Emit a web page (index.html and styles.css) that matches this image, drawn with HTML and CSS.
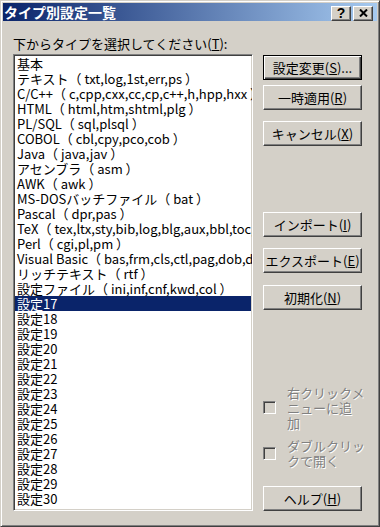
FILE: index.html
```html
<!DOCTYPE html>
<html lang="ja">
<head>
    <meta charset="UTF-8">
    <title>タイプ別設定一覧</title>
    <link rel="stylesheet" href="styles.css">
</head>
<body>

    <div class="window">
        <!-- Title bar -->
        <div class="titlebar">
            <h1>タイプ別設定一覧</h1>
            <div class="title-btn help-btn">?</div>
            <div class="title-btn close-btn">
                <svg width="9" height="8" viewBox="0 0 9 8">
                    <path d="M1 0.5 L8 7.5 M8 0.5 L1 7.5" stroke="#000" stroke-width="2" fill="none"/>
                </svg>
            </div>
        </div>

        <div class="content">
            <!-- Type list -->
            <div class="left">
                <label class="list-label">下からタイプを選択してください(<u>T</u>):</label>
                <ul class="listbox">
                    <li>基本</li>
                    <li>テキスト（ txt,log,1st,err,ps ）</li>
                    <li>C/C++（ c,cpp,cxx,cc,cp,c++,h,hpp,hxx ）</li>
                    <li>HTML（ html,htm,shtml,plg ）</li>
                    <li>PL/SQL（ sql,plsql ）</li>
                    <li>COBOL（ cbl,cpy,pco,cob ）</li>
                    <li>Java（ java,jav ）</li>
                    <li>アセンブラ（ asm ）</li>
                    <li>AWK（ awk ）</li>
                    <li>MS-DOSバッチファイル（ bat ）</li>
                    <li>Pascal（ dpr,pas ）</li>
                    <li>TeX（ tex,ltx,sty,bib,log,blg,aux,bbl,toc,lof,lot,idx ）</li>
                    <li>Perl（ cgi,pl,pm ）</li>
                    <li>Visual Basic（ bas,frm,cls,ctl,pag,dob,dsr,vb ）</li>
                    <li>リッチテキスト（ rtf ）</li>
                    <li>設定ファイル（ ini,inf,cnf,kwd,col ）</li>
                    <li class="selected">設定17</li>
                    <li>設定18</li>
                    <li>設定19</li>
                    <li>設定20</li>
                    <li>設定21</li>
                    <li>設定22</li>
                    <li>設定23</li>
                    <li>設定24</li>
                    <li>設定25</li>
                    <li>設定26</li>
                    <li>設定27</li>
                    <li>設定28</li>
                    <li>設定29</li>
                    <li>設定30</li>
                </ul>
            </div>

            <!-- Buttons -->
            <div class="right">
                <button class="btn default">設定変更(<u>S</u>)...</button>
                <button class="btn mt-5">一時適用(<u>R</u>)</button>
                <button class="btn mt-11">キャンセル(<u>X</u>)</button>

                <button class="btn mt-66">インポート(<u>I</u>)</button>
                <button class="btn mt-11">エクスポート(<u>E</u>)</button>
                <button class="btn mt-12">初期化(<u>N</u>)</button>

                <div class="check-row mt-75">
                    <span class="checkbox"></span>
                    <span class="check-label">右クリックメ<br>ニューに追<br>加</span>
                </div>
                <div class="check-row mt-8">
                    <span class="checkbox"></span>
                    <span class="check-label">ダブルクリッ<br>クで開く</span>
                </div>

                <button class="btn mt-18">ヘルプ(<u>H</u>)</button>
            </div>
        </div>
    </div>

</body>
</html>
```

FILE: styles.css
```css
* {
    margin: 0;
    padding: 0;
    box-sizing: border-box;
}

body {
    font-family: "Noto Sans CJK JP", sans-serif;
    font-size: 13px;
    color: #000;
    background: #D4D0C8;
}

/* Window frame */
.window {
    width: 380px;
    height: 527px;
    background: #D4D0C8;
    border: 1px solid;
    border-color: #D4D0C8 #404040 #404040 #D4D0C8;
    box-shadow: inset 1px 1px #fff, inset -1px -1px #808080;
    padding: 2px;
    display: flex;
    flex-direction: column;
    overflow: hidden;
}

.titlebar {
    height: 18px;
    flex-shrink: 0;
    display: flex;
    align-items: center;
    padding: 0 4px 0 1px;
    background: linear-gradient(to right, #0A246A, #A6CAF0);
    color: #fff;
}

.titlebar h1 {
    flex: 1;
    font-size: 14px;
    font-weight: bold;
    line-height: 18px;
}

.title-btn {
    width: 20px;
    height: 15px;
    margin-top: 2px;
    background: #D4D0C8;
    border: 1px solid;
    border-color: #fff #404040 #404040 #fff;
    box-shadow: inset -1px -1px #808080;
    display: flex;
    align-items: center;
    justify-content: center;
    color: #000;
}

.help-btn {
    font-family: "Liberation Sans", sans-serif;
    font-weight: bold;
    font-size: 14px;
    line-height: 13px;
}

.close-btn {
    margin-left: 2px;
}

.content {
    flex: 1;
    display: flex;
    padding: 15px 15px 0 10px;
}

/* List */
.left {
    width: 240px;
    flex-shrink: 0;
}

.list-label {
    display: block;
    line-height: 15px;
    margin-bottom: 3px;
    white-space: nowrap;
}

.listbox {
    list-style: none;
    height: 457px;
    background: #fff;
    border: 1px solid;
    border-color: #808080 #fff #fff #808080;
    box-shadow: inset 1px 1px #404040, inset -1px -1px #D4D0C8;
    padding: 1px;
    overflow: hidden;
}

.listbox li {
    height: 15px;
    line-height: 15px;
    padding-left: 2px;
    white-space: nowrap;
}

.listbox li.selected {
    background: #0A246A;
    color: #fff;
}

/* Buttons */
.right {
    width: 99px;
    flex-shrink: 0;
    margin-left: 10px;
    margin-top: 19px;
    display: flex;
    flex-direction: column;
}

.btn {
    height: 25px;
    width: 99px;
    flex-shrink: 0;
    font-family: inherit;
    font-size: 13px;
    color: #000;
    background: #D4D0C8;
    border: 1px solid;
    border-color: #fff #404040 #404040 #fff;
    box-shadow: inset -1px -1px #808080, inset 1px 1px #D4D0C8;
    line-height: 21px;
    white-space: nowrap;
}

.btn.default {
    border-color: #000;
    box-shadow: inset 1px 1px #fff, inset -1px -1px #404040, inset -2px -2px #808080;
}

.btn u {
    text-underline-offset: 1px;
}

.check-row {
    display: flex;
    align-items: center;
    gap: 11px;
    flex-shrink: 0;
}

.checkbox {
    width: 13px;
    height: 13px;
    flex-shrink: 0;
    background: #D4D0C8;
    border: 1px solid;
    border-color: #808080 #fff #fff #808080;
    box-shadow: inset 1px 1px #404040, inset -1px -1px #D4D0C8;
}

.check-label {
    line-height: 15px;
    white-space: nowrap;
    color: #808080;
    text-shadow: 1px 1px 0 #fff;
}

.mt-5 { margin-top: 5px; }
.mt-8 { margin-top: 8px; }
.mt-11 { margin-top: 11px; }
.mt-12 { margin-top: 12px; }
.mt-18 { margin-top: 18px; }
.mt-66 { margin-top: 66px; }
.mt-75 { margin-top: 75px; }
```
